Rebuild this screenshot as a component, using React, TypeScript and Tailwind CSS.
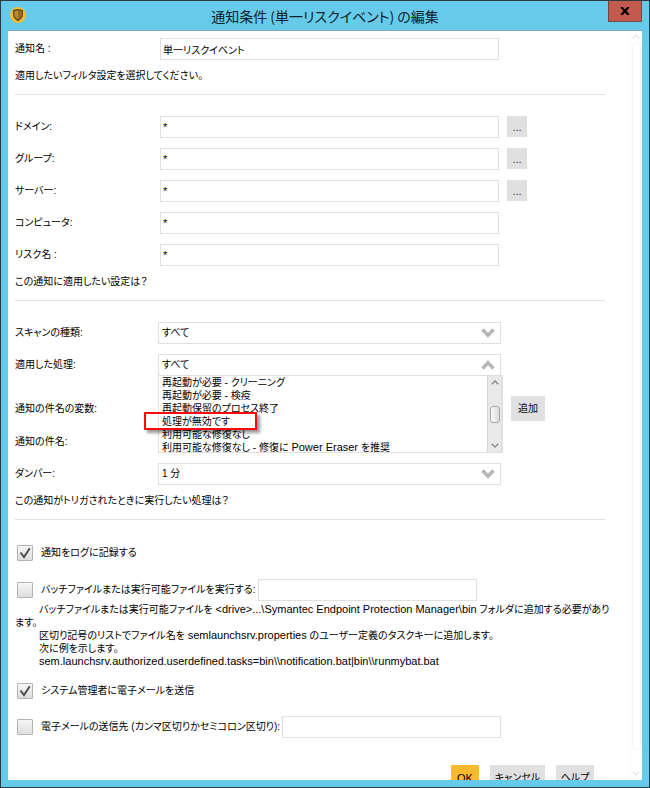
import { useState } from 'react'

const SEP = 'h-px border-0 bg-[#e0e0e0]'
const ROW = 'grid grid-cols-[145px_minmax(0,339px)_auto] items-center'
const FIELD = 'h-[22px] w-full min-w-0 border border-[#e0e0e0] bg-white px-0.5 outline-none'

const FILTERS = [
  { id: 'domain', label: 'ドメイン:', browse: true },
  { id: 'group', label: 'グループ:', browse: true },
  { id: 'server', label: 'サーバー:', browse: true },
  { id: 'computer', label: 'コンピュータ:', browse: false },
  { id: 'risk', label: 'リスク名 :', browse: false },
]

const ACTIONS = [
  '再起動が必要 - クリーニング',
  '再起動が必要 - 検疫',
  '再起動保留のプロセス終了',
  '処理が無効です',
  '利用可能な修復なし',
]

function Latin({ children }: { children: string }) {
  return <span className="text-[11px]">{children}</span>
}

function Chevron({ up = false }: { up?: boolean }) {
  return (
    <svg viewBox="0 0 14 10" className="pointer-events-none absolute top-[6px] right-[6px] h-[10px] w-[14px]" fill="none" stroke="#b5b5b5" strokeWidth="3.4">
      <path d={up ? 'M1.5 8.5 7 2.8l5.5 5.7' : 'M1.5 1.5 7 7.2l5.5-5.7'} />
    </svg>
  )
}

function SmallArrow({ up = false, color }: { up?: boolean; color: string }) {
  return (
    <svg viewBox="0 0 8 5" className="h-[5px] w-2" fill="none" stroke={color} strokeWidth="1.4">
      <path d={up ? 'M.7 4.3 4 1l3.3 3.3' : 'M.7.7 4 4 7.3.7'} />
    </svg>
  )
}

function Dropdown({ id, value, open = false }: { id: string; value: string; open?: boolean }) {
  return (
    <div className="relative -mx-0.5">
      <select id={id} className="block h-[22px] w-full appearance-none border border-[#e0e0e0] bg-white pr-6 pl-[3px] outline-none">
        <option>{value}</option>
      </select>
      <Chevron up={open} />
      {open && <ActionList />}
    </div>
  )
}

function ActionList() {
  const item = 'h-[13px] pl-[3px] leading-[13px] whitespace-nowrap'
  return (
    <div className="absolute top-[21px] -right-0.5 left-0 z-10">
      <div className="flex h-[78px] border border-r-2 border-[#e0e0e0] bg-white">
        <ul role="listbox" aria-label="適用した処理" className="min-w-0 flex-1 overflow-hidden">
          {ACTIONS.map(a => (
            <li key={a} role="option" aria-selected={false} className={item}>{a}</li>
          ))}
          <li role="option" aria-selected={false} className={item}>
            利用可能な修復なし - 修復に <Latin>Power Eraser</Latin> を推奨
          </li>
        </ul>
        <div className="flex w-[14px] flex-col items-center justify-between border-l border-[#d4d4d4] bg-[#e9e9e9] py-[4px]">
          <SmallArrow up color="#8a8a8a" />
          <div className="h-[17px] w-[10px] rounded-[3px] border border-[#a8a8a8] bg-linear-to-r from-[#fafafa] to-[#dcdcdc]" />
          <SmallArrow color="#8a8a8a" />
        </div>
      </div>
      {/* highlight round the chosen action */}
      <div className="absolute top-[37px] -left-[14px] h-[18px] w-[113px] border-2 border-[#fa0a0a] shadow-[3px_3px_3px_rgba(0,0,0,0.4)]" />
    </div>
  )
}

function Tick({ id, checked, onChange }: { id: string; checked: boolean; onChange: () => void }) {
  return (
    <span className="relative mr-2 ml-0.5 block h-4 w-4 shrink-0">
      <input id={id} type="checkbox" checked={checked} onChange={onChange}
        className="block h-4 w-4 appearance-none rounded-[1px] border border-[#b4b4b4] bg-linear-to-b from-[#f6f6f6] to-[#dedede]" />
      {checked && (
        <svg viewBox="0 0 16 16" className="pointer-events-none absolute inset-0" fill="none" stroke="#505050" strokeWidth="2">
          <path d="M3.5 7.5 7 12l5.8-8.8" />
        </svg>
      )}
    </span>
  )
}

export default function App() {
  const [ticks, setTicks] = useState({ log: true, batch: false, admin: true, mail: false })
  const flip = (k: keyof typeof ticks) => () => setTicks(t => ({ ...t, [k]: !t[k] }))

  return (
    <div className="flex h-screen flex-col border border-[#2f3a42] bg-[#66cbea] px-[7px] pb-[7px] font-['Liberation_Sans','Noto_Sans_CJK_JP',sans-serif] text-[10px] leading-5 text-black [font-feature-settings:'palt']">
      <header className="grid h-[30px] shrink-0 grid-cols-[32px_1fr_32px] border-b border-[#7fa9bd]">
        <svg viewBox="0 0 16 16" className="mt-[6px] ml-0.5 h-4 w-4">
          <circle cx="8" cy="8" r="8" fill="#f9b931" />
          <path d="M8 2 3 3v4.500c0 3.200 2.500 5.200 5 6.700 2.500-1.500 5-3.500 5-6.700V3z" fill="#5d4a1c" />
          <path d="M8 3.400 4.400 4.200v3.500c0 2 1.800 3.700 3.600 4.800 1.800-1.100 3.600-2.800 3.600-4.800V4.200z" fill="#b98a28" />
          <path d="M8 3.400l3.600.8v3.500c0 2-1.800 3.700-3.600 4.800z" fill="#8f6b22" />
        </svg>
        <h1 className="text-center font-['Noto_Sans_CJK_JP',sans-serif] text-[14px] leading-[30px] whitespace-nowrap text-[#10222b]">通知条件 (単一リスクイベント) の編集</h1>
        <button aria-label="閉じる" className="-ml-0.5 flex h-[21px] w-[34px] items-center justify-center border border-t-0 border-[#6e4a48] bg-[#c25b4d]">
          <svg viewBox="0 0 10 8" className="h-2 w-[10px]" stroke="#000" strokeWidth="2.2">
            <path d="M1.3 0l7.4 8M8.7 0 1.3 8" />
          </svg>
        </button>
      </header>

      <div className="flex min-h-0 flex-1 overflow-hidden bg-white">
        <main className="min-w-0 flex-1 pt-[7px] pr-6 pl-[7px]">
          <div className={ROW}>
            <label htmlFor="name">通知名 :</label>
            <input id="name" defaultValue="単一リスクイベント" className={FIELD} />
          </div>
          <p className="mt-[6px]">適用したいフィルタ設定を選択してください。</p>
          <hr className={`mt-2 ${SEP}`} />

          <div className="mt-[21px] flex flex-col gap-[10px]">
            {FILTERS.map(f => (
              <div key={f.id} className={ROW}>
                <label htmlFor={f.id}>{f.label}</label>
                <input id={f.id} defaultValue="*" className={`${FIELD} text-[11px]`} />
                {f.browse && <button aria-label={`${f.label} 参照`} className="ml-2 h-[21px] w-5 self-start bg-[#e0e0e0] text-[11px] text-[#333]">...</button>}
              </div>
            ))}
          </div>
          <p className="mt-[6px]">この通知に適用したい設定は？</p>
          <hr className={`mt-2 ${SEP}`} />

          <div className="mt-[21px] flex flex-col">
            <div className={ROW}>
              <label htmlFor="scan">スキャンの種類:</label>
              <Dropdown id="scan" value="すべて" />
            </div>
            <div className={`mt-[10px] ${ROW}`}>
              <label htmlFor="action">適用した処理:</label>
              <Dropdown id="action" value="すべて" open />
            </div>
            <div className={`mt-5 ${ROW}`}>
              <span>通知の件名の変数:</span>
              <span />
              <button className="ml-3 h-[25px] w-[34px] bg-[#e0e0e0]">追加</button>
            </div>
            <div className="mt-[11px]">通知の件名:</div>
            <div className={`mt-[11px] ${ROW}`}>
              <label htmlFor="damper">ダンパー:</label>
              <Dropdown id="damper" value="1 分" />
            </div>
          </div>
          <p className="mt-[6px]">この通知がトリガされたときに実行したい処理は？</p>
          <hr className={`mt-2 ${SEP}`} />

          <div className="mt-[22px] flex h-[22px] items-center">
            <Tick id="log" checked={ticks.log} onChange={flip('log')} />
            <label htmlFor="log">通知をログに記録する</label>
          </div>
          <div className="mt-[15px] flex h-[22px] items-center">
            <Tick id="batch" checked={ticks.batch} onChange={flip('batch')} />
            <label htmlFor="batch" className="mr-0.5 shrink-0 whitespace-nowrap">バッチファイルまたは実行可能ファイルを実行する:</label>
            <input aria-label="実行するファイル" className={`${FIELD} max-w-[219px]`} />
          </div>
          <div className="mt-0.5 -mr-2 leading-[13px]">
            <p className="indent-6">
              バッチファイルまたは実行可能ファイルを <Latin>{'<drive>...\\Symantec Endpoint Protection Manager\\bin'}</Latin> フォルダに追加する必要があります。
            </p>
            <p className="indent-6">
              区切り記号のリストでファイル名を <Latin>semlaunchsrv.properties</Latin> のユーザー定義のタスクキーに追加します。
            </p>
            <p className="indent-6">次に例を示します。</p>
            <p className="indent-6"><Latin>{'sem.launchsrv.authorized.userdefined.tasks=bin\\\\notification.bat|bin\\\\runmybat.bat'}</Latin></p>
          </div>
          <div className="mt-3 flex h-[22px] items-center">
            <Tick id="admin" checked={ticks.admin} onChange={flip('admin')} />
            <label htmlFor="admin">システム管理者に電子メールを送信</label>
          </div>
          <div className="mt-[14px] flex h-[22px] items-center">
            <Tick id="mail" checked={ticks.mail} onChange={flip('mail')} />
            <label htmlFor="mail" className="mr-0.5 shrink-0 whitespace-nowrap">電子メールの送信先 (カンマ区切りかセミコロン区切り):</label>
            <input aria-label="送信先" className={`${FIELD} max-w-[219px]`} />
          </div>

          <div className="mt-[27px] mr-[11px] flex justify-end gap-[11px]">
            <button className="h-[25px] w-7 bg-[#fdb92c] text-[11px]">OK</button>
            <button className="h-[25px] w-[55px] bg-[#e0e0e0]">キャンセル</button>
            <button className="h-[25px] w-[38px] bg-[#e0e0e0]">ヘルプ</button>
          </div>
        </main>

        {/* page scrollbar */}
        <div className="flex w-[13px] shrink-0 flex-col items-center border-l border-[#fafafa] bg-[#fefefe] pt-[3px] pb-1">
          <SmallArrow up color="#e6e6e6" />
          <div className="mt-1 w-[9px] flex-1 rounded-sm border border-[#f4f4f4] bg-white" />
          <div className="mt-[21px]"><SmallArrow color="#e6e6e6" /></div>
        </div>
      </div>
    </div>
  )
}
